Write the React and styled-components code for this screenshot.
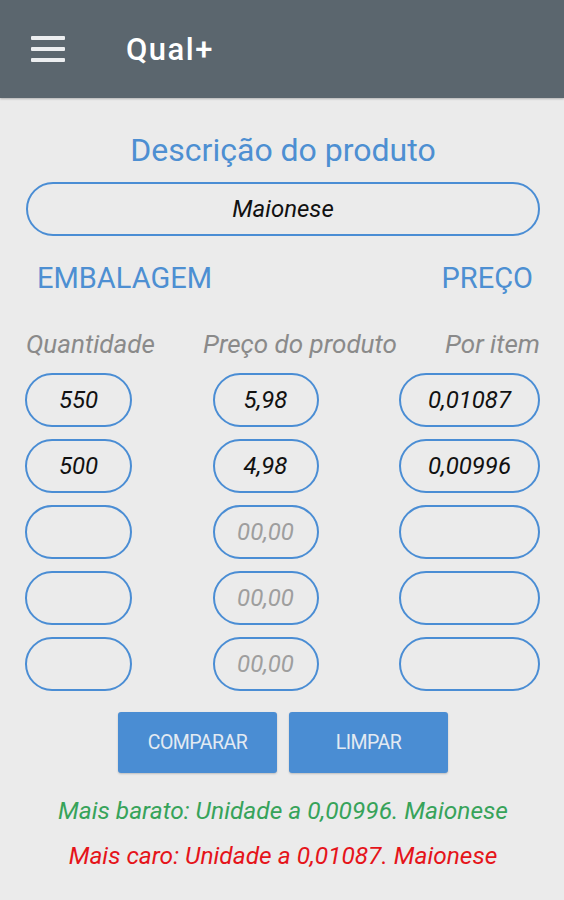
import React from 'react';
import styled, { createGlobalStyle } from 'styled-components';

const GlobalStyle = createGlobalStyle`
  body {
    margin: 0;
    background: #ebebeb;
    font-family: Roboto, "Liberation Sans", sans-serif;
  }
`;

const Header = styled.header`
  height: 98px;
  background: #5b666e;
  display: flex;
  align-items: center;
  padding-left: 31px;
  box-shadow: 0 1px 2px rgba(0, 0, 0, 0.25);
`;

const Burger = styled.div`
  width: 34px;
  display: flex;
  flex-direction: column;
  gap: 7px;
  margin-right: 61px;

  span {
    display: block;
    height: 4px;
    background: #eceef0;
    border-radius: 1px;
  }
`;

const Title = styled.h1`
  margin: 0;
  color: #ffffff;
  font-size: 31px;
  font-weight: 500;
  letter-spacing: 1.5px;
`;

const Main = styled.main`
  padding: 34px 24px 40px 26px;
  display: flex;
  flex-direction: column;
`;

const Heading = styled.div`
  text-align: center;
  color: #4d8fd2;
  font-size: 32px;
  line-height: 36px;
`;

const Field = styled.div`
  box-sizing: border-box;
  height: 54px;
  width: ${(p) => p.width || 'auto'};
  border: 2px solid #4a8dd4;
  border-radius: 27px;
  display: flex;
  align-items: center;
  justify-content: center;
  font-style: italic;
  font-size: 24px;
  color: ${(p) => (p.placeholder ? '#9e9e9e' : '#111111')};
  justify-self: ${(p) => p.align || 'stretch'};
`;

const DescField = styled(Field)`
  margin-top: 14px;
`;

const SectionRow = styled.div`
  display: flex;
  justify-content: space-between;
  margin-top: 25px;
  padding: 0 7px 0 11px;
  color: #4d8fd2;
  font-size: 29px;
  line-height: 34px;
`;

const LabelRow = styled.div`
  display: flex;
  justify-content: space-between;
  margin-top: 34px;
  color: #8a8a8a;
  font-style: italic;
  font-size: 26px;
  line-height: 30px;
`;

const Grid = styled.div`
  display: grid;
  grid-template-columns: 107px 1fr 141px;
  row-gap: 12px;
  margin-top: 14px;
  margin-left: -1px;
`;

const Buttons = styled.div`
  display: flex;
  justify-content: center;
  gap: 12px;
  margin-top: 21px;
`;

const Button = styled.button`
  width: 159px;
  height: 61px;
  border: none;
  border-radius: 3px;
  background: #4a8dd3;
  color: #e3eaf2;
  font-family: Roboto, "Liberation Sans", sans-serif;
  font-size: 19.5px;
  letter-spacing: -0.5px;
  box-shadow: 0 1px 2px rgba(0, 0, 0, 0.2);
`;

const Result = styled.div`
  text-align: center;
  font-style: italic;
  font-size: 24.5px;
  line-height: 30px;
  color: ${(p) => p.color};
  margin-top: ${(p) => p.gap}px;
`;

const rows = [
  ['550', '5,98', '0,01087'],
  ['500', '4,98', '0,00996'],
  ['', '', ''],
  ['', '', ''],
  ['', '', ''],
];

export default function App() {
  return (
    <>
      <GlobalStyle />
      <Header>
        <Burger>
          <span />
          <span />
          <span />
        </Burger>
        <Title>Qual+</Title>
      </Header>
      <Main>
        <Heading>Descrição do produto</Heading>
        <DescField>Maionese</DescField>
        <SectionRow>
          <span>EMBALAGEM</span>
          <span>PREÇO</span>
        </SectionRow>
        <LabelRow>
          <span>Quantidade</span>
          <span>Preço do produto</span>
          <span>Por item</span>
        </LabelRow>
        <Grid>
          {rows.map((r, i) => (
            <React.Fragment key={i}>
              <Field>{r[0]}</Field>
              <Field width="106px" align="center" placeholder={!r[1] ? 1 : 0}>
                {r[1] || '00,00'}
              </Field>
              <Field>{r[2]}</Field>
            </React.Fragment>
          ))}
        </Grid>
        <Buttons>
          <Button>COMPARAR</Button>
          <Button>LIMPAR</Button>
        </Buttons>
        <Result color="#37a35a" gap={23}>
          Mais barato: Unidade a 0,00996. Maionese
        </Result>
        <Result color="#e5141a" gap={15}>
          Mais caro: Unidade a 0,01087. Maionese
        </Result>
      </Main>
    </>
  );
}
